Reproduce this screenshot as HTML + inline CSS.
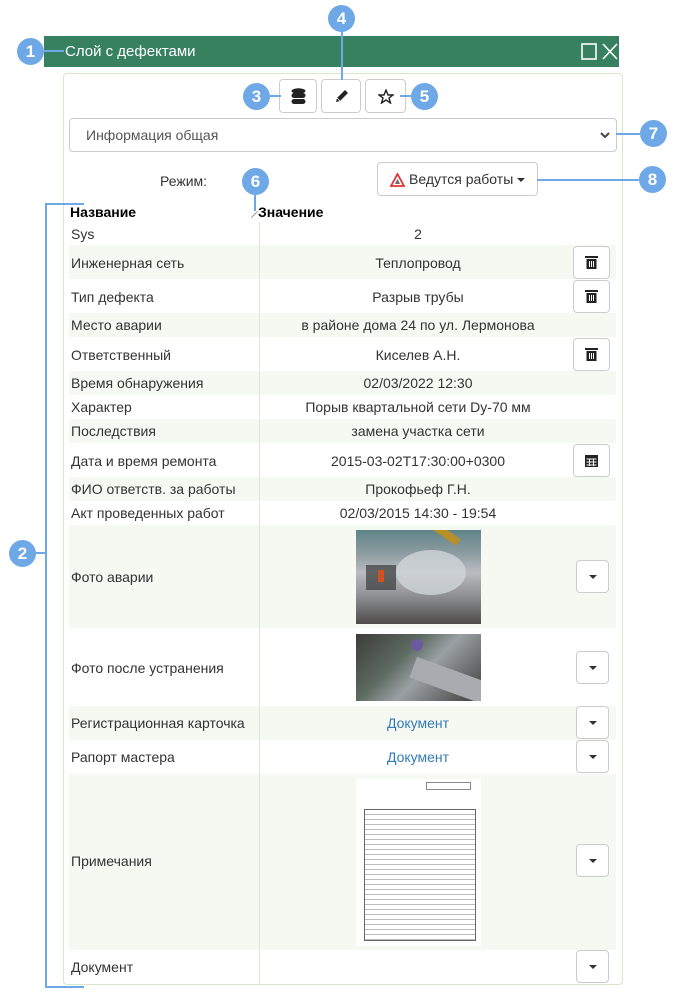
<!DOCTYPE html>
<html><head><meta charset="utf-8"><style>
*{box-sizing:border-box;margin:0;padding:0}
body{width:677px;height:998px;background:#fff;font-family:"Liberation Sans",sans-serif;font-size:14px;color:#333;position:relative;overflow:hidden}
.a{position:absolute}
.title{left:44px;top:36px;width:575px;height:31px;background:#378160;color:#fff;font-size:15px;padding:7px 0 0 21px}
.panel{left:63px;top:73px;width:560px;height:912px;border:1px solid #d6e9c6;border-radius:4px}
.btn{position:absolute;border:1px solid #ccc;border-radius:4px;background:#fff}
.row{position:absolute;left:69px;width:547px}
.st{background:#f6f9f2}
.lab{position:absolute;left:2px}
.val{position:absolute;left:190px;width:318px;text-align:center}
.c{position:absolute;width:27px;height:27px;border-radius:50%;background:#6fa8e6;color:#fff;font-weight:bold;font-size:17px;text-align:center;line-height:27px}
.ln{position:absolute;background:#6fa8e6}
.dd{position:absolute;left:507px;width:33px;height:33px}
.dd:after{content:"";position:absolute;left:12px;top:14px;border-left:4px solid transparent;border-right:4px solid transparent;border-top:4px solid #333}
</style></head><body>
<div class="a title">Слой с дефектами</div>
<svg class="a" style="left:581px;top:43px" width="38" height="18"><rect x="1" y="1" width="14" height="15" fill="none" stroke="#fff" stroke-width="1.6"/><path d="M22 1L36 16M36 1L22 16" stroke="#fff" stroke-width="1.6"/></svg>
<div class="a panel"></div>
<div class="btn" style="left:279px;top:79px;width:38px;height:34px"><svg class="a" style="left:11px;top:8px" width="15" height="17"><ellipse cx="7.5" cy="3" rx="7" ry="2.7" fill="#222"/><rect x="0.5" y="5" width="14" height="5" rx="2.5" fill="#222"/><rect x="0.5" y="11" width="14" height="5" rx="2.5" fill="#222"/></svg></div>
<div class="btn" style="left:321px;top:79px;width:40px;height:34px"><svg class="a" style="left:12px;top:8px" width="16" height="16"><path d="M2 14L3 10L11 2L14 5L6 13Z" fill="#222"/><path d="M3 10L6 13" stroke="#fff" stroke-width="0.8"/></svg></div>
<div class="btn" style="left:365px;top:79px;width:41px;height:34px"><svg class="a" style="left:12px;top:9px" width="16" height="15"><path d="M8 1L10 6L15 6L11 9L12.5 14L8 11L3.5 14L5 9L1 6L6 6Z" fill="none" stroke="#222" stroke-width="1.4"/></svg></div>
<div class="btn" style="left:69px;top:118px;width:548px;height:34px;color:#555;padding:8px 0 0 16px;font-size:14px">Информация общая<svg class="a" style="left:530px;top:13px" width="10" height="7"><path d="M1 1L5 5L9 1" fill="none" stroke="#444" stroke-width="2"/></svg></div>
<div class="a" style="left:160px;top:173px">Режим:</div>
<div class="btn" style="left:377px;top:162px;width:161px;height:34px;padding:8px 0 0 31px;font-size:14px">Ведутся работы<span style="display:inline-block;margin-left:4px;vertical-align:middle;border-left:4px solid transparent;border-right:4px solid transparent;border-top:4px solid #333"></span>
<svg class="a" style="left:12px;top:10px" width="15" height="14"><path d="M7.5 1L14 13H1Z" fill="#fff" stroke="#d33" stroke-width="1.8"/><path d="M5 11L7.5 6L10 11Z" fill="#666"/></svg></div>
<div class="a" style="left:70px;top:204px;font-weight:bold;color:#000">Название</div>
<div class="a" style="left:258px;top:204px;font-weight:bold;color:#000">Значение</div>
<div class="a" style="left:250px;top:214px;width:9px;height:1px;background:#999;transform:rotate(-45deg)"></div>
<div class="a" style="left:259px;top:222px;width:1px;height:763px;background:#dfe8d8;z-index:2"></div>

<div class="row" style="top:222px;height:23px"><span class="lab" style="top:4px">Sys</span><span class="val" style="top:4px">2</span></div>
<div class="row st" style="top:245px;height:34px"><span class="lab" style="top:10px">Инженерная сеть</span><span class="val" style="top:10px">Теплопровод</span></div>
<div class="row" style="top:279px;height:34px"><span class="lab" style="top:10px">Тип дефекта</span><span class="val" style="top:10px">Разрыв трубы</span></div>
<div class="row st" style="top:313px;height:24px"><span class="lab" style="top:4px">Место аварии</span><span class="val" style="top:4px">в районе дома 24 по ул. Лермонова</span></div>
<div class="row" style="top:337px;height:34px"><span class="lab" style="top:10px">Ответственный</span><span class="val" style="top:10px">Киселев А.Н.</span></div>
<div class="row st" style="top:371px;height:24px"><span class="lab" style="top:4px">Время обнаружения</span><span class="val" style="top:4px">02/03/2022 12:30</span></div>
<div class="row" style="top:395px;height:24px"><span class="lab" style="top:4px">Характер</span><span class="val" style="top:4px">Порыв квартальной сети Dy-70 мм</span></div>
<div class="row st" style="top:419px;height:24px"><span class="lab" style="top:4px">Последствия</span><span class="val" style="top:4px">замена участка сети</span></div>
<div class="row" style="top:443px;height:34px"><span class="lab" style="top:10px">Дата и время ремонта</span><span class="val" style="top:10px">2015-03-02T17:30:00+0300</span></div>
<div class="row st" style="top:477px;height:24px"><span class="lab" style="top:4px">ФИО ответств. за работы</span><span class="val" style="top:4px">Прокофьеф Г.Н.</span></div>
<div class="row" style="top:501px;height:24px"><span class="lab" style="top:4px">Акт проведенных работ</span><span class="val" style="top:4px">02/03/2015 14:30 - 19:54</span></div>
<div class="row st" style="top:525px;height:103px"><span class="lab" style="top:44px">Фото аварии</span><div class="btn dd" style="top:35px"></div></div>
<div class="row" style="top:628px;height:78px"><span class="lab" style="top:32px">Фото после устранения</span><div class="btn dd" style="top:23px"></div></div>
<div class="row st" style="top:706px;height:34px"><span class="lab" style="top:9px">Регистрационная карточка</span><span class="val" style="top:9px;color:#337ab7">Документ</span><div class="btn dd" style="top:0px"></div></div>
<div class="row" style="top:740px;height:34px"><span class="lab" style="top:9px">Рапорт мастера</span><span class="val" style="top:9px;color:#337ab7">Документ</span><div class="btn dd" style="top:0px"></div></div>
<div class="row st" style="top:774px;height:176px"><span class="lab" style="top:79px">Примечания</span><div class="btn dd" style="top:70px"></div></div>
<div class="row" style="top:950px;height:34px"><span class="lab" style="top:9px">Документ</span><div class="btn dd" style="top:0px"></div></div>

<div class="btn" style="left:573px;top:246px;width:37px;height:33px"></div>
<div class="btn" style="left:573px;top:280px;width:37px;height:33px"></div>
<div class="btn" style="left:573px;top:338px;width:37px;height:33px"></div>
<div class="btn" style="left:573px;top:444px;width:37px;height:33px"></div>
<svg class="a" style="left:585px;top:255px" width="13" height="15"><rect x="0" y="1" width="13" height="2" fill="#222"/><rect x="1.5" y="4" width="10" height="10" fill="#222"/><path d="M4.5 6v6M6.5 6v6M8.5 6v6" stroke="#fff"/></svg>
<svg class="a" style="left:585px;top:289px" width="13" height="15"><rect x="0" y="1" width="13" height="2" fill="#222"/><rect x="1.5" y="4" width="10" height="10" fill="#222"/><path d="M4.5 6v6M6.5 6v6M8.5 6v6" stroke="#fff"/></svg>
<svg class="a" style="left:585px;top:347px" width="13" height="15"><rect x="0" y="1" width="13" height="2" fill="#222"/><rect x="1.5" y="4" width="10" height="10" fill="#222"/><path d="M4.5 6v6M6.5 6v6M8.5 6v6" stroke="#fff"/></svg>
<svg class="a" style="left:585px;top:453px" width="13" height="14"><rect x="0" y="2" width="13" height="12" fill="#222"/><path d="M1.5 6h10M1.5 9h10M1.5 12h10M4.5 6v7M8.5 6v7" stroke="#fff" stroke-width="0.9"/></svg>

<div class="a" style="left:356px;top:530px;width:125px;height:94px;overflow:hidden;background:linear-gradient(180deg,#5f8488 0%,#8d9ca0 25%,#b9bcc0 45%,#8e9093 70%,#4e4c4a 100%)"><div class="a" style="left:40px;top:20px;width:70px;height:45px;background:#d0d4d8;border-radius:50%;opacity:.8"></div><div class="a" style="left:75px;top:0;width:30px;height:8px;background:#b8902a;transform:rotate(35deg)"></div><div class="a" style="left:10px;top:35px;width:30px;height:25px;background:#3a3a3a;opacity:.7"></div><div class="a" style="left:22px;top:40px;width:6px;height:12px;background:#d05020"></div></div>
<div class="a" style="left:356px;top:634px;width:125px;height:67px;overflow:hidden;background:linear-gradient(135deg,#3e3c3a 0%,#5c6a60 35%,#9aa0a4 55%,#3e3c3a 100%)"><div class="a" style="left:55px;top:35px;width:75px;height:22px;background:#a8acb0;transform:rotate(20deg)"></div><div class="a" style="left:55px;top:5px;width:12px;height:12px;background:#6b5aa0;border-radius:50%"></div></div>
<div class="a" style="left:356px;top:779px;width:125px;height:167px;background:#fff"><div class="a" style="left:8px;top:30px;width:112px;height:132px;border:1px solid #666;background:repeating-linear-gradient(180deg,#fff 0 4px,#bbb 4px 5px)"></div><div class="a" style="left:70px;top:3px;width:45px;height:8px;border:1px solid #888"></div></div>

<div class="ln" style="left:44px;top:50px;width:20px;height:2px"></div>
<div class="c" style="left:17px;top:38px">1</div>
<div class="ln" style="left:341px;top:22px;width:2px;height:58px"></div>
<div class="c" style="left:328px;top:5px">4</div>
<div class="ln" style="left:257px;top:95px;width:24px;height:2px"></div>
<div class="c" style="left:243px;top:83px">3</div>
<div class="ln" style="left:400px;top:95px;width:20px;height:2px"></div>
<div class="c" style="left:411px;top:83px">5</div>
<div class="ln" style="left:616px;top:133px;width:25px;height:2px"></div>
<div class="c" style="left:640px;top:120px">7</div>
<div class="ln" style="left:537px;top:179px;width:105px;height:2px"></div>
<div class="c" style="left:639px;top:166px">8</div>
<div class="ln" style="left:254px;top:185px;width:2px;height:26px"></div>
<div class="c" style="left:242px;top:168px">6</div>
<div class="ln" style="left:45px;top:203px;width:2px;height:785px"></div>
<div class="ln" style="left:45px;top:203px;width:39px;height:2px"></div>
<div class="ln" style="left:45px;top:986px;width:39px;height:2px"></div>
<div class="ln" style="left:30px;top:552px;width:16px;height:2px"></div>
<div class="c" style="left:9px;top:540px">2</div>
</body></html>
